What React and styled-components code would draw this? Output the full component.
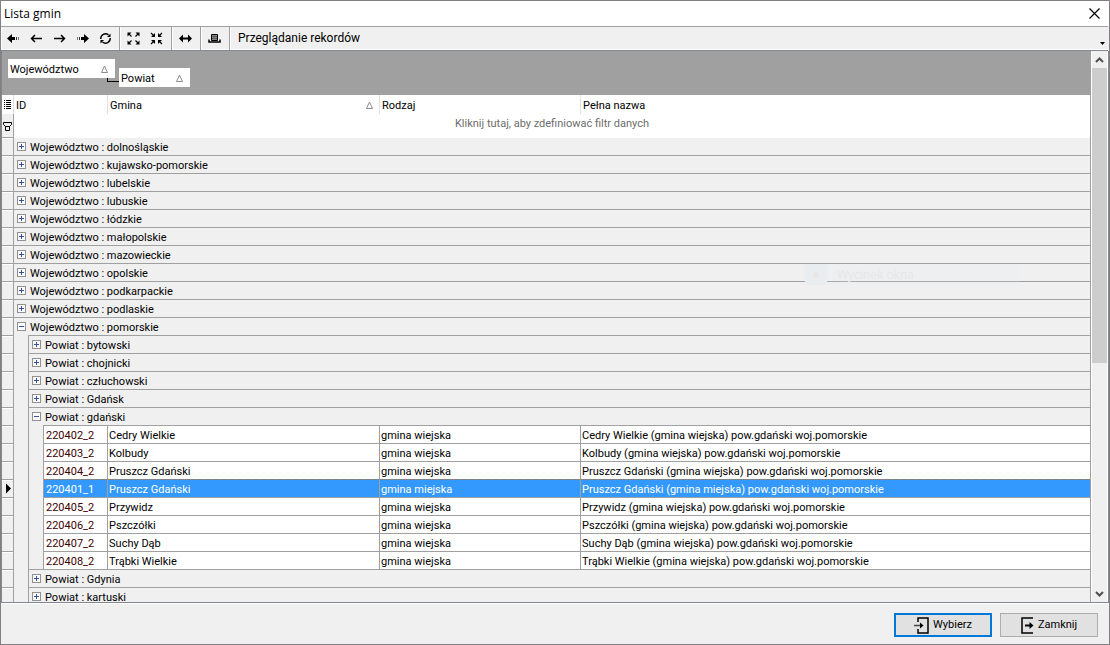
import { useState } from "react";
import styled, { createGlobalStyle, css } from "styled-components";

const voivodeships = [
  { name: "dolnośląskie" },
  { name: "kujawsko-pomorskie" },
  { name: "lubelskie" },
  { name: "lubuskie" },
  { name: "łódzkie" },
  { name: "małopolskie" },
  { name: "mazowieckie" },
  { name: "opolskie" },
  { name: "podkarpackie" },
  { name: "podlaskie" },
  {
    name: "pomorskie",
    counties: [
      { name: "bytowski" },
      { name: "chojnicki" },
      { name: "człuchowski" },
      { name: "Gdańsk" },
      {
        name: "gdański",
        communes: [
          { id: "220402_2", name: "Cedry Wielkie", kind: "gmina wiejska" },
          { id: "220403_2", name: "Kolbudy", kind: "gmina wiejska" },
          { id: "220404_2", name: "Pruszcz Gdański", kind: "gmina wiejska" },
          { id: "220401_1", name: "Pruszcz Gdański", kind: "gmina miejska" },
          { id: "220405_2", name: "Przywidz", kind: "gmina wiejska" },
          { id: "220406_2", name: "Pszczółki", kind: "gmina wiejska" },
          { id: "220407_2", name: "Suchy Dąb", kind: "gmina wiejska" },
          { id: "220408_2", name: "Trąbki Wielkie", kind: "gmina wiejska" },
        ],
      },
      { name: "Gdynia" },
      { name: "kartuski" },
    ],
  },
];

// tree -> flat list of visible rows
const flatten = (closed) => {
  const rows = [];
  voivodeships.forEach((v) => {
    const vOpen = !!v.counties && !closed[v.name];
    rows.push({ type: "group", level: 0, key: v.name, label: `Województwo : ${v.name}`, open: vOpen });
    if (!vOpen) return;
    v.counties.forEach((c) => {
      const key = `${v.name}/${c.name}`;
      const cOpen = !!c.communes && !closed[key];
      rows.push({ type: "group", level: 1, key, label: `Powiat : ${c.name}`, open: cOpen });
      if (!cOpen) return;
      c.communes.forEach((g) =>
        rows.push({
          type: "data",
          key: g.id,
          ...g,
          full: `${g.name} (${g.kind}) pow.${c.name} woj.${v.name}`,
        })
      );
    });
  });
  return rows;
};

const Svg = ({ size = 13, w, h, children }) => (
  <svg width={w || size} height={h || size} viewBox={`0 0 ${w || size} ${h || size}`} fill="none" stroke="#000" aria-hidden="true">
    {children}
  </svg>
);

const SortMark = () => (
  <Svg w={9} h={9}>
    <path d="M4.5 1L1.5 7.5H7.5Z" stroke="#8c8c8c" />
  </Svg>
);

const icons = {
  first: (
    <Svg>
      <path d="M0 6.5L5 2V5H8V8H5V11Z" fill="#000" stroke="none" />
      <path d="M9.5 5V8" stroke="#333" />
      <path d="M11.5 5V8" stroke="#777" />
    </Svg>
  ),
  prev: (
    <Svg>
      <path d="M1.5 6.5H12M5 3L1.5 6.5L5 10" strokeWidth="1.5" />
    </Svg>
  ),
  next: (
    <Svg>
      <path d="M1 6.5H11.5M8 3L11.5 6.5L8 10" strokeWidth="1.5" />
    </Svg>
  ),
  last: (
    <Svg>
      <path d="M13 6.5L8 2V5H5V8H8V11Z" fill="#000" stroke="none" />
      <path d="M3.5 5V8" stroke="#333" />
      <path d="M1.5 5V8" stroke="#777" />
    </Svg>
  ),
  refresh: (
    <Svg>
      <path d="M1.8 7A4.7 4.7 0 0 1 9.5 3M11.2 6A4.7 4.7 0 0 1 3.5 10" strokeWidth="1.4" />
      <path d="M8 5H11.5V1.5ZM5 8H1.5V11.5Z" fill="#000" stroke="none" />
    </Svg>
  ),
  expand: (
    <Svg>
      <path d="M0.5 4.5V0.5H4.5ZM8.5 0.5H12.5V4.5ZM12.5 8.5V12.5H8.5ZM4.5 12.5H0.5V8.5Z" fill="#000" stroke="none" />
      <path d="M2 2L4.5 4.5M11 2L8.5 4.5M11 11L8.5 8.5M2 11L4.5 8.5" strokeWidth="1.2" />
    </Svg>
  ),
  collapse: (
    <Svg>
      <path d="M5 1V5H1ZM8 1V5H12ZM8 12V8H12ZM5 12V8H1Z" fill="#000" stroke="none" />
      <path d="M1 1L4 4M12 1L9 4M12 12L9 9M1 12L4 9" strokeWidth="1.2" />
    </Svg>
  ),
  width: (
    <Svg>
      <path d="M2 6.5H11" strokeWidth="2" />
      <path d="M0 6.5L4 2.5V10.5ZM13 6.5L9 2.5V10.5Z" fill="#000" stroke="none" />
    </Svg>
  ),
  print: (
    <Svg>
      <path d="M3.5 2.5H9.5V8.5H3.5Z" fill="#8a8a8a" />
      <path d="M4 4.5H9M4 6.5H9" stroke="#555" />
      <path d="M1 7.5V10H12V7.5" strokeWidth="1.5" />
    </Svg>
  ),
};

const toolGroups = [
  [
    ["first", "Pierwszy"],
    ["prev", "Poprzedni"],
    ["next", "Następny"],
    ["last", "Ostatni"],
    ["refresh", "Odśwież"],
  ],
  [
    ["expand", "Rozwiń"],
    ["collapse", "Zwiń"],
  ],
  [["width", "Dopasuj szerokość"]],
  [["print", "Drukuj"]],
];

const GroupRow = ({ row, onToggle }) => (
  <tr>
    <Indicator />
    {row.level === 1 && <Indent />}
    <GroupCell colSpan={row.level === 0 ? 6 : 5}>
      <GroupInner>
        <Toggle aria-label={row.label} aria-expanded={row.open} onClick={() => onToggle(row.key)}>
          <svg width="9" height="9" viewBox="0 0 9 9" shapeRendering="crispEdges" aria-hidden="true">
            <rect x="0.5" y="0.5" width="8" height="8" fill="#fafafa" stroke="#919191" />
            <path d={row.open ? "M2 4.5H7" : "M2 4.5H7M4.5 2V7"} stroke="#3b519c" />
          </svg>
        </Toggle>
        {row.label}
      </GroupInner>
    </GroupCell>
  </tr>
);

const DataRow = ({ row, selected, onSelect }) => (
  <tr onClick={() => onSelect(row.id)} aria-selected={selected}>
    <Indicator>
      {selected && (
        <Svg w={11} h={11}>
          <path d="M4 0.5L9 5.5L4 10.5Z" fill="#000" stroke="none" />
        </Svg>
      )}
    </Indicator>
    <Indent />
    <Indent />
    <Cell $selected={selected} $code>{row.id}</Cell>
    <Cell $selected={selected}>{row.name}</Cell>
    <Cell $selected={selected}>{row.kind}</Cell>
    <Cell $selected={selected}>{row.full}</Cell>
  </tr>
);

const App = () => {
  const [closed, setClosed] = useState({});
  const [selected, setSelected] = useState("220401_1");
  const toggle = (key) => setClosed({ ...closed, [key]: !closed[key] });

  return (
    <>
      <GlobalStyle />
      <Window>
        <TitleBar>
          <Title>Lista gmin</Title>
          <CloseBtn aria-label="Zamknij okno">
            <Svg size={11}>
              <path d="M0.5 0.5L10.5 10.5M10.5 0.5L0.5 10.5" strokeWidth="1.2" />
            </Svg>
          </CloseBtn>
        </TitleBar>

        <Toolbar>
          {toolGroups.map((group) => (
            <ToolGroup key={group[0][0]}>
              {group.map(([icon, label]) => (
                <ToolBtn key={icon} aria-label={label}>
                  {icons[icon]}
                </ToolBtn>
              ))}
            </ToolGroup>
          ))}
          <ToolText>Przeglądanie rekordów</ToolText>
          <MoreBtn aria-label="Więcej">
            <Svg w={5} h={3}>
              <path d="M0 0H5L2.5 3Z" fill="#000" stroke="none" />
            </Svg>
          </MoreBtn>
        </Toolbar>

        <Main>
          <Grid>
            <GroupPanel>
              <GroupChip $width={107}>
                Województwo <SortMark />
              </GroupChip>
              <Link aria-hidden="true" />
              <GroupChip $width={71} $nested>
                Powiat <SortMark />
              </GroupChip>
            </GroupPanel>
            <Table>
              <colgroup>
                <Col $w={12} />
                <Col $w={15} />
                <Col $w={15} />
                <Col $w={64} />
                <Col $w={272} />
                <Col $w={201} />
                <col />
              </colgroup>
              <thead>
                <tr>
                  <HeadCell $narrow>
                    <Svg w={7} h={9}>
                      <path d="M0 0.5H1M2 0.5H7M0 2.5H1M2 2.5H7M0 4.5H1M2 4.5H7M0 6.5H1M2 6.5H7M0 8.5H1M2 8.5H7" />
                    </Svg>
                  </HeadCell>
                  <HeadCell colSpan={3}>ID</HeadCell>
                  <HeadCell>
                    <HeadInner>
                      Gmina <SortMark />
                    </HeadInner>
                  </HeadCell>
                  <HeadCell>Rodzaj</HeadCell>
                  <HeadCell>Pełna nazwa</HeadCell>
                </tr>
                <tr>
                  <FilterMark>
                    <Svg w={9} h={9}>
                      <path d="M0.5 0.5H8.5V2.5L6.5 4.5H2.5L0.5 2.5ZM2.5 4.5V8.5H6.5V4.5" />
                    </Svg>
                  </FilterMark>
                  <FilterCell colSpan={6}>Kliknij tutaj, aby zdefiniować filtr danych</FilterCell>
                </tr>
              </thead>
              <Body>
                {flatten(closed).map((row) =>
                  row.type === "group" ? (
                    <GroupRow key={row.key} row={row} onToggle={toggle} />
                  ) : (
                    <DataRow key={row.key} row={row} selected={row.id === selected} onSelect={setSelected} />
                  )
                )}
              </Body>
            </Table>
            <Ghost aria-hidden="true">
              <GhostIcon />
              Wycinek okna
            </Ghost>
          </Grid>
          <ScrollBar>
            <ScrollBtn aria-label="W górę">
              <Svg w={9} h={6}>
                <path d="M1 5L4.5 1.5L8 5" stroke="#505050" strokeWidth="2" />
              </Svg>
            </ScrollBtn>
            <Track>
              <Thumb />
            </Track>
            <ScrollBtn aria-label="W dół">
              <Svg w={9} h={6}>
                <path d="M1 1L4.5 4.5L8 1" stroke="#505050" strokeWidth="2" />
              </Svg>
            </ScrollBtn>
          </ScrollBar>
        </Main>

        <Footer>
          <ActionBtn $primary>
            <Svg w={15} h={17}>
              <path d="M4 5V1H14V16H4V12" strokeWidth="1.5" />
              <path d="M0 8.5H8" stroke="#444" strokeWidth="1.5" />
              <path d="M6 5.5L9.5 8.5L6 11.5Z" fill="#000" stroke="none" />
            </Svg>
            Wybierz
          </ActionBtn>
          <ActionBtn>
            <Svg w={13} h={17}>
              <path d="M12 1H1V16H12" strokeWidth="1.5" />
              <path d="M4 8.5H10" strokeWidth="2" />
              <path d="M8.5 5L12.5 8.5L8.5 12Z" fill="#000" stroke="none" />
            </Svg>
            Zamknij
          </ActionBtn>
        </Footer>
      </Window>
    </>
  );
};

export default App;

const GlobalStyle = createGlobalStyle`
  * {
    box-sizing: border-box;
  }
  body {
    margin: 0;
    font: 11px/14px Tahoma, Roboto, sans-serif;
    color: #000;
  }
  button {
    font: inherit;
    color: inherit;
    padding: 0;
    border: none;
    background: none;
  }
  svg {
    display: block;
    flex: none;
  }
`;

const Window = styled.div`
  display: flex;
  flex-direction: column;
  height: 100vh;
  border: 1px solid #838085;
  background-color: #f0f0f0;
`;
const TitleBar = styled.header`
  display: flex;
  align-items: center;
  justify-content: space-between;
  flex: none;
  height: 25px;
  padding: 0 8px 0 3px;
  background-color: #fff;
`;
const Title = styled.h1`
  margin: 0;
  font: 12px/16px "Segoe UI", "Open Sans", sans-serif;
`;
const CloseBtn = styled.button`
  padding: 1px;
`;
const Toolbar = styled.div`
  display: flex;
  flex: none;
  height: 25px;
  border-top: 1px solid #a0a0a0;
  border-bottom: 1px solid #828790;
  box-shadow: inset 0 -1px #fff;
  margin-right: 1px;
`;
const ToolGroup = styled.div`
  display: flex;
  padding: 0 3px 0 2px;
  border-right: 1px solid #a0a0a0;
  box-shadow: inset 1px 0 #fff;

  &:first-child {
    padding: 0 2px 0 1px;
  }
`;
const ToolBtn = styled.button`
  display: flex;
  align-items: center;
  justify-content: center;
  width: 23px;
  height: 22px;
`;
const ToolText = styled.span`
  flex: 1;
  padding: 0 8px;
  font-size: 12px;
  line-height: 22px;
  box-shadow: inset 1px 0 #fff;
`;
const MoreBtn = styled.button`
  align-self: flex-end;
  padding: 5px 3px;
`;
const Main = styled.main`
  display: flex;
  flex: 1;
  min-height: 0;
  border: solid #828790;
  border-width: 0 1px 1px;
`;
const Grid = styled.div`
  position: relative;
  flex: 1;
  min-width: 0;
  overflow: hidden;
`;
const GroupPanel = styled.div`
  display: flex;
  align-items: flex-start;
  height: 44px;
  padding: 8px 6px;
  background-color: #a0a0a0;
`;
const GroupChip = styled.div`
  display: flex;
  align-items: center;
  justify-content: space-between;
  width: ${({ $width }) => $width}px;
  height: 19px;
  padding: 2px 6px 0 2px;
  margin-top: ${({ $nested }) => ($nested ? 9 : 0)}px;
  background-color: #fff;
`;
const Link = styled.span`
  width: 12px;
  height: 4px;
  margin: 19px 0 0 -8px;
  border: solid #000;
  border-width: 0 0 1px 1px;
`;
const Table = styled.table`
  width: 100%;
  table-layout: fixed;
  border-collapse: separate;
  border-spacing: 0;
  border-right: 1px solid #a0a0a0;
  background-color: #fff;
`;
const Col = styled.col`
  width: ${({ $w }) => $w}px;
`;
const HeadCell = styled.th`
  height: 19px;
  padding: ${({ $narrow }) => ($narrow ? "0 2px" : "2px 5px 0 2px")};
  font-weight: 400;
  text-align: left;
  border-right: 1px solid #e0e0e0;

  &:last-child {
    border-right: none;
  }
`;
const HeadInner = styled.div`
  display: flex;
  align-items: center;
  justify-content: space-between;
`;
const FilterMark = styled.td`
  height: 23px;
  padding: 1px 1px 0;
  background-color: #f0f0f0;
  border-right: 1px solid #a0a0a0;
`;
const FilterCell = styled.td`
  padding: 3px 0 0;
  text-align: center;
  vertical-align: top;
  color: #6d6d6d;
`;
const line = css`
  height: 18px;
  border-top: 1px solid #a0a0a0;
`;
const Body = styled.tbody`
  background-color: #f0f0f0;

  tr:first-child td + td {
    border-top-color: #fff;
  }
`;
const Indicator = styled.td`
  ${line}
  padding: 0;
  border-right: 1px solid #a0a0a0;
  box-shadow: inset 0 1px #fff;
`;
const Indent = styled.td`
  padding: 0;
  border-right: 1px solid #a0a0a0;
`;
const GroupCell = styled.td`
  ${line}
  padding: 3px 3px 0;
`;
const GroupInner = styled.div`
  display: flex;
  align-items: flex-start;
  gap: 4px;
`;
const Toggle = styled.button`
  display: block;
  margin-top: 1px;
`;
const Cell = styled.td`
  ${line}
  padding: 3px 1px 0 ${({ $code }) => ($code ? 2 : 1)}px;
  white-space: nowrap;
  overflow: hidden;
  border-right: 1px solid #a0a0a0;
  color: ${({ $selected, $code }) => ($selected ? "#fff" : $code ? "#400000" : "#000")};
  background-color: ${({ $selected }) => ($selected ? "#3399ff" : "#fff")};

  &:last-child {
    border-right: none;
  }

  ${({ $selected }) =>
    $selected &&
    css`
      border-top: 1px dotted #c87020;
    `}
`;
const Ghost = styled.div`
  position: absolute;
  top: 213px;
  right: 72px;
  display: flex;
  align-items: center;
  gap: 10px;
  width: 214px;
  height: 21px;
  font: 12px/21px "Segoe UI", "Open Sans", sans-serif;
  color: #e6e6e6;
  background-color: rgba(225, 235, 245, 0.15);
  pointer-events: none;
`;
const GhostIcon = styled.span`
  display: flex;
  align-items: center;
  justify-content: center;
  width: 22px;
  height: 21px;
  background-color: #e9edf0;

  &::before {
    content: "";
    width: 6px;
    height: 6px;
    border-radius: 50%;
    background-color: #e6e6e6;
  }
`;
const ScrollBar = styled.div`
  display: flex;
  flex-direction: column;
  width: 17px;
  border: solid #fff;
  border-width: 0 1px;
`;
const ScrollBtn = styled.button`
  display: flex;
  align-items: center;
  justify-content: center;
  height: 17px;
`;
const Track = styled.div`
  flex: 1;
`;
const Thumb = styled.div`
  height: 57%;
  background-color: #cdcdcd;
`;
const Footer = styled.footer`
  display: flex;
  justify-content: flex-end;
  gap: 8px;
  flex: none;
  padding: 9px 11px 7px;
  border-top: 1px solid #fff;
`;
const ActionBtn = styled.button`
  display: flex;
  align-items: center;
  justify-content: center;
  gap: 4px;
  width: 98px;
  height: 24px;
  line-height: 16px;
  background-color: #e1e1e1;
  border: ${({ $primary }) => ($primary ? "2px solid #0078d7" : "1px solid #adadad")};
`;
